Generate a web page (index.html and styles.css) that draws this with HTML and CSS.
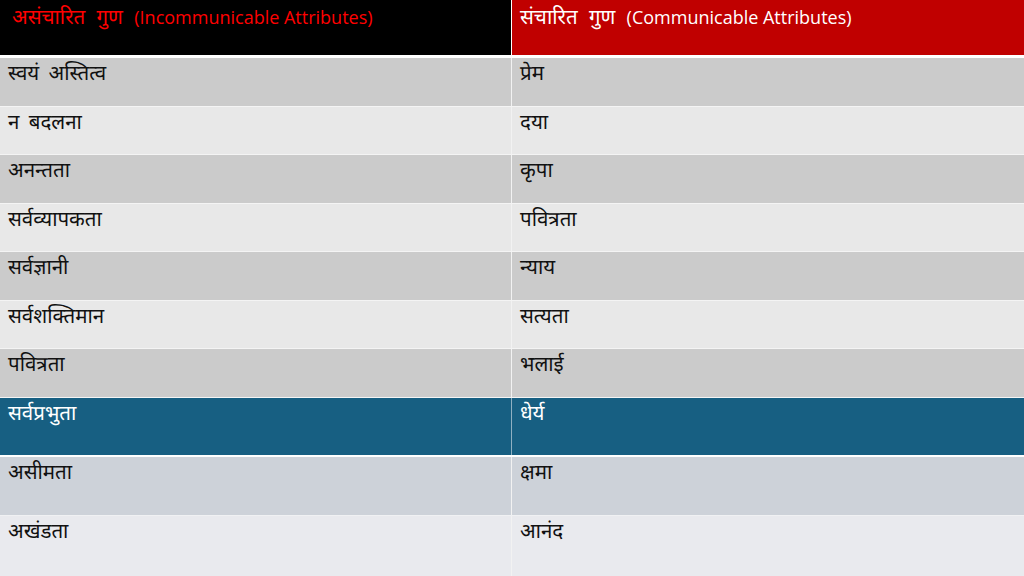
FILE: index.html
```html
<!DOCTYPE html>
<html lang="hi">
<head>
<meta charset="utf-8">
<title>गुण</title>
<link rel="stylesheet" href="styles.css">
</head>
<body>
<div class="table">
  <div class="row head">
    <div class="cell c1">असंचारित गुण <span class="lat">(Incommunicable Attributes)</span></div>
    <div class="cell c2">संचारित गुण <span class="lat">(Communicable Attributes)</span></div>
  </div>
  <div class="row odd"><div class="cell">स्वयं अस्तित्व</div><div class="cell">प्रेम</div></div>
  <div class="row even"><div class="cell">न बदलना</div><div class="cell">दया</div></div>
  <div class="row odd"><div class="cell">अनन्तता</div><div class="cell">कृपा</div></div>
  <div class="row even"><div class="cell">सर्वव्यापकता</div><div class="cell">पवित्रता</div></div>
  <div class="row odd"><div class="cell">सर्वज्ञानी</div><div class="cell">न्याय</div></div>
  <div class="row even"><div class="cell">सर्वशक्तिमान</div><div class="cell">सत्यता</div></div>
  <div class="row odd"><div class="cell">पवित्रता</div><div class="cell">भलाई</div></div>
  <div class="row hi"><div class="cell">सर्वप्रभुता</div><div class="cell">धेर्य</div></div>
  <div class="row b1"><div class="cell">असीमता</div><div class="cell">क्षमा</div></div>
  <div class="row b2"><div class="cell">अखंडता</div><div class="cell">आनंद</div></div>
</div>
</body>
</html>
```
FILE: styles.css
```css
html, body {
  margin: 0;
  padding: 0;
  background: #ffffff;
}
body {
  width: 1024px;
  height: 576px;
  overflow: hidden;
  font-family: "Noto Sans Devanagari", "Nirmala UI", "Mangal", "Noto Sans", "Liberation Sans", sans-serif;
  font-size: 20.5px;
  color: #111111;
}
.table {
  display: flex;
  flex-direction: column;
}
.row {
  display: grid;
  grid-template-columns: 511px 1fr;
  column-gap: 1px;
  background: #f2f2f2;
  box-sizing: border-box;
}
.cell {
  padding: 3px 0 0 8px;
  line-height: 28px;
  word-spacing: 4px;
  white-space: nowrap;
}
.lat {
  font-family: "Open Sans", "Liberation Sans", sans-serif;
  font-size: 18px;
  word-spacing: 0;
}
.head {
  height: 55px;
  margin-bottom: 3px;
  background: #ffffff;
  column-gap: 1px;
}
.head .cell {
  padding: 3px 0 0 12px;
  word-spacing: 6px;
}
.head .c1 {
  background: #000000;
  color: #ff0000;
}
.head .c2 {
  background: #c00000;
  color: #ffffff;
  padding-left: 8px;
}
.odd, .even {
  height: 48.5px;
  border-bottom: 1px solid #f4f4f4;
}
.odd .cell { background: #cbcbcb; }
.even .cell { background: #e8e8e8; }
.hi {
  height: 57px;
  margin-bottom: 2px;
  background: #8fb0c2;
}
.hi .cell {
  background: #175f82;
  color: #ffffff;
}
.b1 {
  height: 59px;
  border-bottom: 1px solid #f0f1f3;
}
.b1 .cell { background: #cdd2d9; }
.b2 {
  height: 60px;
}
.b2 .cell { background: #e9eaee; }
```
